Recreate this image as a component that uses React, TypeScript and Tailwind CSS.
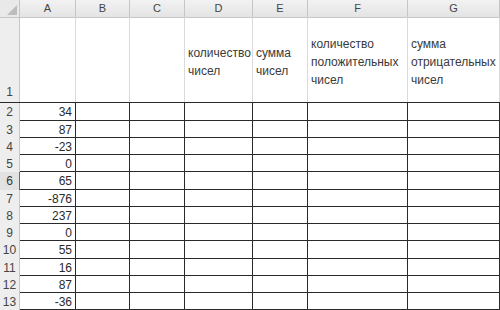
import React from "react";

const COLS = "grid grid-cols-[20px_56px_54px_55px_68px_55px_100px_92px]";
const LETTERS = ["A", "B", "C", "D", "E", "F", "G"];
const VALUES = ["34", "87", "-23", "0", "65", "-876", "237", "0", "55", "16", "87", "-36"];

const HEADINGS: Record<number, string[]> = {
  3: ["количество", "чисел"],
  4: ["сумма", "чисел"],
  5: ["количество", "положительных", "чисел"],
  6: ["сумма", "отрицательных", "чисел"],
};

function Corner() {
  return (
    <div className="relative h-full border-r border-b border-[#c6c6c6] bg-[#e9e9e9]">
      <svg className="absolute left-[7px] top-[5px]" width="10" height="10" viewBox="0 0 10 10">
        <polygon points="10,0 10,10 0,10" fill="#bdbdbd" />
      </svg>
    </div>
  );
}

export default function App() {
  return (
    <div
      className="w-[500px] h-[310px] overflow-hidden bg-white text-[#333]"
      style={{ fontFamily: '"Liberation Sans", Arial, sans-serif' }}
    >
      {/* column letters */}
      <div className={`${COLS} h-[17px]`}>
        <Corner />
        {LETTERS.map((l) => (
          <div
            key={l}
            className="flex items-center justify-center border-r border-b border-[#c6c6c6] bg-gradient-to-b from-[#f2f2f2] to-[#e4e4e4] text-[11px] text-[#444]"
          >
            {l}
          </div>
        ))}
      </div>

      {/* row 1 with the wrapped column headings */}
      <div className={`${COLS} h-[86px] border-b border-[#2a2a2a]`}>
        <div className="flex items-end justify-center pb-[1px] border-r border-[#c6c6c6] bg-[#eeeeee] text-[12px] text-[#444]">
          1
        </div>
        {LETTERS.map((l, i) => (
          <div key={l} className="flex items-center pt-[4px] pl-[3px] border-r border-[#dadada] text-[12px] leading-[18px] text-[#3a3a3a]">
            {HEADINGS[i] && (
              <div className="flex flex-col">
                {HEADINGS[i].map((t, k) => (
                  <span key={k}>{t}</span>
                ))}
              </div>
            )}
          </div>
        ))}
      </div>

      {/* data rows */}
      {VALUES.map((v, r) => (
        <div
          key={r}
          className={`${COLS} ${r % 4 === 0 ? "h-[18px]" : "h-[17px]"} border-b border-[#2a2a2a]`}
        >
          <div
            className={`flex items-center justify-center border-r text-[12px] ${
              r === 4
                ? "bg-[#e2e2e2] border-[#2f8a56] text-[#333]"
                : "bg-[#eeeeee] border-[#c6c6c6] text-[#444]"
            }`}
          >
            {r + 2}
          </div>
          <div className="flex items-center justify-end pr-[3px] border-r border-[#2a2a2a] text-[12px] text-[#2a2a2a]">
            {v}
          </div>
          {LETTERS.slice(1).map((l) => (
            <div key={l} className="border-r border-[#2a2a2a]" />
          ))}
        </div>
      ))}
    </div>
  );
}
